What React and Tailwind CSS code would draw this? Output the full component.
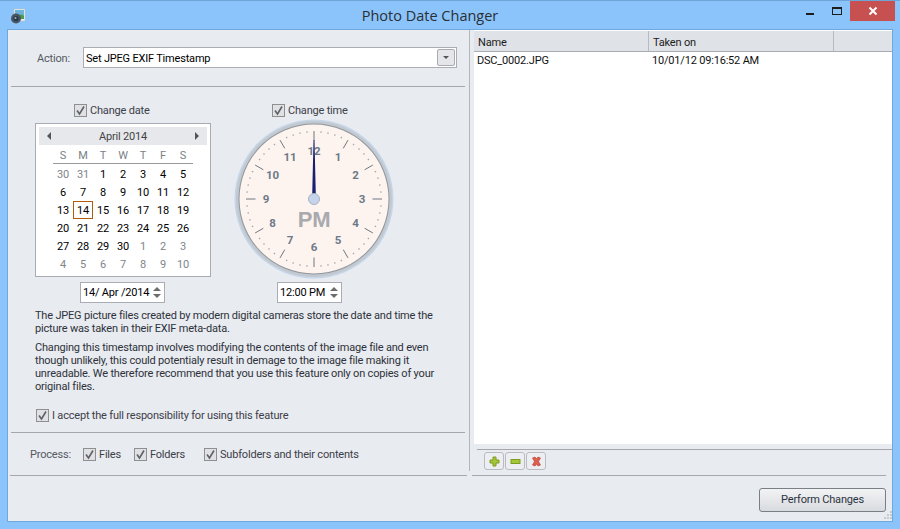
import React from "react";

const days = [
  [30, 31, 1, 2, 3, 4, 5],
  [6, 7, 8, 9, 10, 11, 12],
  [13, 14, 15, 16, 17, 18, 19],
  [20, 21, 22, 23, 24, 25, 26],
  [27, 28, 29, 30, 1, 2, 3],
  [4, 5, 6, 7, 8, 9, 10],
];

function isOther(row, d) {
  return (row === 0 && d > 20) || (row >= 4 && d < 15);
}

function Check({ label, className = "" }) {
  return (
    <div className={"flex items-center gap-[3px] " + className}>
      <span className="w-[13px] h-[13px] border border-[#8f8f8f] bg-[#dfe1e4] flex items-center justify-center shrink-0">
        <svg width="11" height="11" viewBox="0 0 11 11">
          <path d="M2 5.5 L4.5 9 L9 1.5" fill="none" stroke="#5f6266" strokeWidth="1.6" />
        </svg>
      </span>
      <span className="whitespace-nowrap pt-[2px]">{label}</span>
    </div>
  );
}

function Spinner() {
  return (
    <span className="ml-auto flex flex-col items-center gap-[3px] w-[14px]">
      <span className="w-0 h-0 border-x-[4px] border-x-transparent border-b-[4px] border-b-[#6d6d6d]" />
      <span className="w-0 h-0 border-x-[4px] border-x-transparent border-t-[4px] border-t-[#6d6d6d]" />
    </span>
  );
}

function Calendar() {
  return (
    <div className="w-[176px] h-[154px] border border-[#a9adb3] bg-white px-[3px] pt-[3px]">
      <div className="h-[18px] bg-[#e6e8ec] flex items-center justify-between px-[8px] text-[#444]">
        <span className="w-0 h-0 border-y-[4px] border-y-transparent border-r-[4px] border-r-[#555]" />
        <span className="pt-[2px]">April 2014</span>
        <span className="w-0 h-0 border-y-[4px] border-y-transparent border-l-[4px] border-l-[#555]" />
      </div>
      <div className="mx-[14px] h-[19px] pt-[3px] border-b border-[#9a9a9a] grid grid-cols-7 text-center text-[#7b7f85] leading-[15px]">
        {["S", "M", "T", "W", "T", "F", "S"].map((d, i) => (
          <span key={i}>{d}</span>
        ))}
      </div>
      <div className="mx-[14px] mt-px grid grid-cols-7 text-center leading-[20px]">
        {days.map((row, r) =>
          row.map((d, i) => (
            <span
              key={r + "-" + i}
              className={
                "h-[18px] " +
                (isOther(r, d) ? "text-[#80858c] " : "text-black ") +
                (r === 2 && i === 1 ? "border border-[#b15a12] leading-[18px]" : "")
              }
            >
              {d}
            </span>
          ))
        )}
      </div>
    </div>
  );
}

function Clock() {
  const cx = 80;
  const cy = 80;
  const ticks = [];
  for (let i = 0; i < 60; i++) {
    const a = (i * Math.PI) / 30;
    const s = Math.sin(a);
    const c = -Math.cos(a);
    const major = i % 5 === 0;
    const r1 = 68;
    const r2 = major ? 58.5 : 66.5;
    ticks.push(
      <line
        key={i}
        x1={cx + s * r1}
        y1={cy + c * r1}
        x2={cx + s * r2}
        y2={cy + c * r2}
        stroke={major ? "#6f7680" : "#a8a8a8"}
        strokeWidth={major ? 1 : 1.3}
      />
    );
  }
  const nums = [12, 1, 2, 3, 4, 5, 6, 7, 8, 9, 10, 11];
  return (
    <svg width="160" height="160" viewBox="0 0 160 160" className="block">
      <circle cx={cx} cy={cy} r="79.5" fill="#c6d6ea" />
      <circle cx={cx} cy={cy} r="78" fill="#c2c8ce" />
      <circle cx={cx} cy={cy} r="75.5" fill="#8e969e" />
      <circle cx={cx} cy={cy} r="74.5" fill="#fdf4ef" />
      {ticks}
      {nums.map((n, i) => {
        const a = (i * Math.PI) / 6;
        const r = 48;
        return (
          <text
            key={n}
            x={cx + Math.sin(a) * r}
            y={cy - Math.cos(a) * r + 3.5}
            textAnchor="middle"
            fontSize="11.5"
            fontWeight="700"
            fill="#6d7989"
            fontFamily="Roboto, sans-serif"
          >
            {n}
          </text>
        );
      })}
      <text x={cx} y={cy + 27.5} textAnchor="middle" fontSize="22" fontWeight="700" fill="#a9a9ae" fontFamily="Liberation Sans, sans-serif">
        PM
      </text>
      <path d="M78.2 76 L79.5 21 L80.5 21 L81.8 76 Z" fill="#1a2270" />
      <circle cx={cx} cy={cy} r="5.5" fill="#c5d4ea" stroke="#a7b4c6" />
    </svg>
  );
}

function ToolButton({ children }) {
  return (
    <span className="w-[20px] h-[18px] border border-[#b9bcc1] rounded-[3px] bg-[#eceef1] flex items-center justify-center">
      {children}
    </span>
  );
}

export default function App() {
  return (
    <div
      className="w-[900px] h-[529px] overflow-hidden bg-[#8ac4fa] border-t border-[#6ea4d6] flex flex-col text-[11px] tracking-[-0.19px] text-[#3c4048]"
      style={{ fontFamily: 'Roboto, "Liberation Sans", Arial, sans-serif' }}
    >
      {/* title bar */}
      <div className="h-[28px] shrink-0 flex items-center relative">
        <svg width="16" height="16" viewBox="0 0 16 16" className="ml-[10px] mt-[1px]">
          <rect x="4" y="1" width="11" height="12" fill="#e8eef0" stroke="#b8c0c4" strokeWidth="0.5" />
          <rect x="5" y="2" width="9" height="9" fill="#6db3d8" />
          <path d="M6 11 Q10 4 14 8 L14 11 Z" fill="#4c9a4a" />
          <circle cx="6" cy="10.5" r="5" fill="#4a5560" />
          <circle cx="6" cy="10.5" r="2.6" fill="#26384f" />
          <circle cx="5.5" cy="10" r="1" fill="#9fb4c9" />
        </svg>
        <div className="absolute left-[330px] w-[200px] top-[4px] text-center text-[14.5px] tracking-normal leading-[22px] text-[#2a2f36]" style={{ fontFamily: '"Open Sans", sans-serif' }}>
          Photo Date Changer
        </div>
        <div className="ml-auto mr-[5px] self-start flex items-start">
          <span className="w-[8px] h-[2px] bg-[#1d1d1d] mt-[12px] mr-[18px]" />
          <span className="w-[8px] h-[5px] border border-[#1d1d1d] border-t-2 mt-[6px] mr-[8px] box-content" />
          <span className="w-[45px] h-[20px] bg-[#c75050] flex items-center justify-center">
            <svg width="10" height="10" viewBox="0 0 10 10">
              <path d="M1.5 1.5 L8.5 8.5 M8.5 1.5 L1.5 8.5" stroke="#fff" strokeWidth="2" />
            </svg>
          </span>
        </div>
      </div>

      {/* client area */}
      <div className="mx-[7px] h-[493px] border border-[#6fa8dc] bg-[#e8ebf0] flex flex-col relative">
        <div className="flex h-[441px] shrink-0">
          {/* left pane */}
          <div className="w-[462px] shrink-0 pl-[3px] pt-[17px] border-r border-[#b4b6ba]">
            <div className="flex items-center pl-[26px] h-[21px]">
              <span className="w-[46px] pt-[3px] text-[#555a62]">Action:</span>
              <div className="w-[374px] h-[21px] border border-[#abadb3] bg-white flex items-center pl-[2px] pr-[1px] text-black">
                <span className="pt-[3px]">Set JPEG EXIF Timestamp</span>
                <span className="ml-auto w-[18px] h-[17px] border border-[#a8abb0] rounded-[2px] bg-[#e4e6ea] flex items-center justify-center">
                  <span className="w-0 h-0 border-x-[3px] border-x-transparent border-t-[3px] border-t-[#555]" />
                </span>
              </div>
            </div>
            <div className="h-px bg-[#a5a7ab] mt-[18px] w-[454px]" />
            <div className="flex mt-[16px] pl-[24px]">
              <div className="w-[176px] flex flex-col">
                <Check label="Change date" className="h-[14px] ml-[39px]" />
                <div className="mt-[6px]">
                  <Calendar />
                </div>
                <div className="mt-[5px] ml-[45px] w-[85px] h-[21px] border border-[#a9adb3] bg-white flex items-center pl-[2px] text-black">
                  <span className="whitespace-nowrap pt-[2px]">14/ Apr /2014</span>
                  <Spinner />
                </div>
              </div>
              <div className="ml-[23px] w-[160px] flex flex-col">
                <Check label="Change time" className="h-[14px] ml-[38px]" />
                <div className="mt-[2px]">
                  <Clock />
                </div>
                <div className="mt-[3px] ml-[43px] w-[65px] h-[21px] border border-[#a9adb3] bg-white flex items-center pl-[2px] text-black">
                  <span className="whitespace-nowrap pt-[2px]">12:00 PM</span>
                  <Spinner />
                </div>
              </div>
            </div>
            <div className="pl-[24px] mt-[6px] leading-[13px] text-[#2e323a] whitespace-nowrap">
              <p>The JPEG picture files created by modern digital cameras store the date and time the<br />picture was taken in their EXIF meta-data.</p>
              <p className="mt-[6px]">Changing this timestamp involves modifying the contents of the image file and even<br />though unlikely, this could potentialy result in demage to the image file making it<br />unreadable. We therefore recommend that you use this feature only on copies of your<br />original files.</p>
            </div>
            <Check label="I accept the full responsibility for using this feature" className="ml-[25px] mt-[13px]" />
            <div className="h-px bg-[#a5a7ab] mt-[7px] w-[454px]" />
            <div className="flex items-center pl-[19px] mt-[14px] h-[16px]">
              <span className="w-[53px] pt-[2px] text-[#555a62]">Process:</span>
              <Check label="Files" />
              <Check label="Folders" className="ml-[13px]" />
              <Check label="Subfolders and their contents" className="ml-[19px]" />
            </div>
          </div>

          {/* right pane */}
          <div className="flex-1 pl-[4px] flex flex-col min-w-0">
            <div className="h-[414px] shrink-0 bg-white flex flex-col">
              <div className="h-[21px] mt-px bg-[#dfe2e7] border-b border-[#a9adb3] flex text-[#1c1c1c] leading-[23px]">
                <span className="w-[175px] pl-[4px] border-r border-[#b7babf]">Name</span>
                <span className="w-[185px] pl-[4px] border-r border-[#b7babf]">Taken on</span>
              </div>
              <div className="flex text-[#111] leading-[18px]">
                <span className="w-[175px] pl-[3px]">DSC_0002.JPG</span>
                <span className="pl-[3px]">10/01/12 09:16:52 AM</span>
              </div>
            </div>
            <div className="ml-[3px] mt-[5px] h-px bg-[#a5a7ab]" />
            <div className="flex gap-px ml-[10px] mt-[2px]">
              <ToolButton>
                <svg width="11" height="11" viewBox="0 0 11 11">
                  <path d="M4 1 H7 V4 H10 V7 H7 V10 H4 V7 H1 V4 H4 Z" fill="#a4c639" stroke="#7e9c22" />
                </svg>
              </ToolButton>
              <ToolButton>
                <svg width="11" height="7" viewBox="0 0 11 7">
                  <rect x="1" y="1.5" width="9" height="4" fill="#a4c639" stroke="#7e9c22" />
                </svg>
              </ToolButton>
              <ToolButton>
                <svg width="11" height="11" viewBox="0 0 11 11">
                  <path d="M1.5 2 L4 1 L5.5 3 L7 1 L9.5 2 L7.5 5.5 L9.5 9 L7 10 L5.5 8 L4 10 L1.5 9 L3.5 5.5 Z" fill="#dc5f50" stroke="#bf4538" strokeWidth="0.7" />
                </svg>
              </ToolButton>
            </div>
          </div>
        </div>

        <div className="flex mt-[4px] ml-[2px] mr-[6px] gap-[5px]">
          <div className="h-px bg-[#a5a7ab] w-[457px]" />
          <div className="h-px bg-[#a5a7ab] flex-1" />
        </div>
        <div className="flex justify-end pr-[6px] pt-[12px]">
          <button className="w-[127px] h-[24px] pt-px border border-[#7a7e85] rounded-[3px] bg-gradient-to-b from-[#f2f3f5] to-[#d8dbdf] text-[#2c3340]">
            Perform Changes
          </button>
        </div>
        {/* resize grip */}
        <svg width="11" height="11" viewBox="0 0 11 11" className="absolute right-0 bottom-0">
          <path d="M9 1h2v2H9z M6 4h2v2H6z M9 4h2v2H9z M3 7h2v2H3z M6 7h2v2H6z M9 7h2v2H9z" fill="#c6c9ce" />
        </svg>
      </div>
    </div>
  );
}
